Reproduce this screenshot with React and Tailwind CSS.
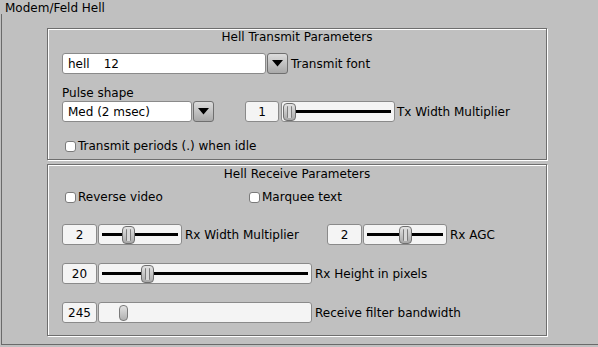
import React from 'react';

// FLTK-style "Modem/Feld Hell" configuration panel

function DownButton() {
  return (
    <div className="flex h-full w-[21px] items-center justify-center rounded-[3px] border border-[#6f6f6f] bg-gradient-to-b from-[#dcdcdc] to-[#a9a9a9]">
      <svg width="11" height="7" viewBox="0 0 11 7">
        <polygon points="0,0 11,0 5.5,6.5" fill="#000" />
      </svg>
    </div>
  );
}

function Choice({ boxW, children }) {
  return (
    <div className="flex h-[21px] gap-px">
      <div className={`flex h-full items-center rounded-[3px] border border-[#8a8a8a] bg-white pl-[5px] ${boxW}`}>
        {children}
      </div>
      <DownButton />
    </div>
  );
}

function Counter({ value, w = 'w-[35px]' }) {
  return (
    <div className={`flex h-[21px] items-center justify-center rounded-[3px] border border-[#8a8a8a] bg-[#f4f4f4] ${w}`}>
      {value}
    </div>
  );
}

function Slider({ w, knobLeft, track = true, plain = false }) {
  return (
    <div className={`relative h-[21px] rounded-[3px] border border-[#8a8a8a] bg-[#f4f4f4] ${w}`}>
      {track && <div className="absolute left-[3px] right-[3px] top-[8px] h-[3px] bg-black" />}
      {plain ? (
        <div className={`absolute top-[2px] h-[16px] w-[9px] rounded-[4px] border border-[#7a7a7a] bg-gradient-to-b from-[#e2e2e2] to-[#b0b0b0] ${knobLeft}`} />
      ) : (
        <div className={`absolute top-[1px] flex h-[18px] w-[13px] items-center justify-center rounded-[4px] border border-[#6f6f6f] bg-gradient-to-b from-[#e4e4e4] to-[#a8a8a8] ${knobLeft}`}>
          <div className="h-[12px] w-[5px] rounded-[1px] border-x border-[#7c7c7c] bg-[#d8d8d8]" />
        </div>
      )}
    </div>
  );
}

function Check({ label }) {
  return (
    <div className="flex items-center">
      <div className="ml-[3px] h-[11px] w-[11px] rounded-[3px] border border-[#7a7a7a] bg-white" />
      <span className="ml-[2px]">{label}</span>
    </div>
  );
}

function Group({ h, children }) {
  return (
    <div className={`ml-[45px] w-[500px] border border-[#6e6e6e] shadow-[inset_1px_1px_0_#ffffff,1px_1px_0_#ffffff] ${h}`}>
      {children}
    </div>
  );
}

export default function App() {
  return (
    <div className="h-[347px] w-[598px] overflow-hidden bg-[#c0c0c0] font-['DejaVu_Sans',sans-serif] text-[12px] leading-[14px] text-black">
      <div className="h-[14px] pl-[5px] pt-px">Modem/Feld Hell</div>

      <div className="ml-px h-[331px] border-b border-l border-[#6a6a6a] pt-[14px]">
        <Group h="h-[132px]">
          <div className="mt-px text-center">Hell Transmit Parameters</div>

          <div className="mt-[9px] flex items-center pl-[14px]">
            <Choice boxW="w-[204px]">
              <span>hell</span>
              <span className="ml-[14px]">12</span>
            </Choice>
            <span className="ml-[3px]">Transmit font</span>
          </div>

          <div className="mt-[12px] pl-[14px]">Pulse shape</div>

          <div className="mt-px flex items-center pl-[14px]">
            <Choice boxW="w-[130px]">Med (2 msec)</Choice>
            <div className="ml-[31px]">
              <Counter value="1" w="w-[34px]" />
            </div>
            <div className="ml-[2px]">
              <Slider w="w-[114px]" knobLeft="left-px" />
            </div>
            <span className="ml-[2px]">Tx Width Multiplier</span>
          </div>

          <div className="mt-[17px] pl-[14px]">
            <Check label="Transmit periods (.) when idle" />
          </div>
        </Group>

        <div className="mt-[4px]">
          <Group h="h-[172px]">
            <div className="mt-[2px] text-center">Hell Receive Parameters</div>

            <div className="mt-[9px] flex items-center pl-[14px]">
              <div className="w-[184px]">
                <Check label="Reverse video" />
              </div>
              <Check label="Marquee text" />
            </div>

            <div className="mt-[20px] flex items-center pl-[14px]">
              <div className="flex w-[265px] items-center">
                <Counter value="2" />
                <div className="ml-[1px]">
                  <Slider w="w-[84px]" knobLeft="left-[23px]" />
                </div>
                <span className="ml-[3px]">Rx Width Multiplier</span>
              </div>
              <Counter value="2" />
              <div className="ml-[1px]">
                <Slider w="w-[84px]" knobLeft="left-[35px]" />
              </div>
              <span className="ml-[3px]">Rx AGC</span>
            </div>

            <div className="mt-[18px] flex items-center pl-[14px]">
              <Counter value="20" />
              <div className="ml-[1px]">
                <Slider w="w-[214px]" knobLeft="left-[42px]" />
              </div>
              <span className="ml-[3px]">Rx Height in pixels</span>
            </div>

            <div className="mt-[18px] flex items-center pl-[14px]">
              <Counter value="245" />
              <div className="ml-[1px]">
                <Slider w="w-[214px]" knobLeft="left-[20px]" track={false} plain />
              </div>
              <span className="ml-[3px]">Receive filter bandwidth</span>
            </div>
          </Group>
        </div>
      </div>
    </div>
  );
}
